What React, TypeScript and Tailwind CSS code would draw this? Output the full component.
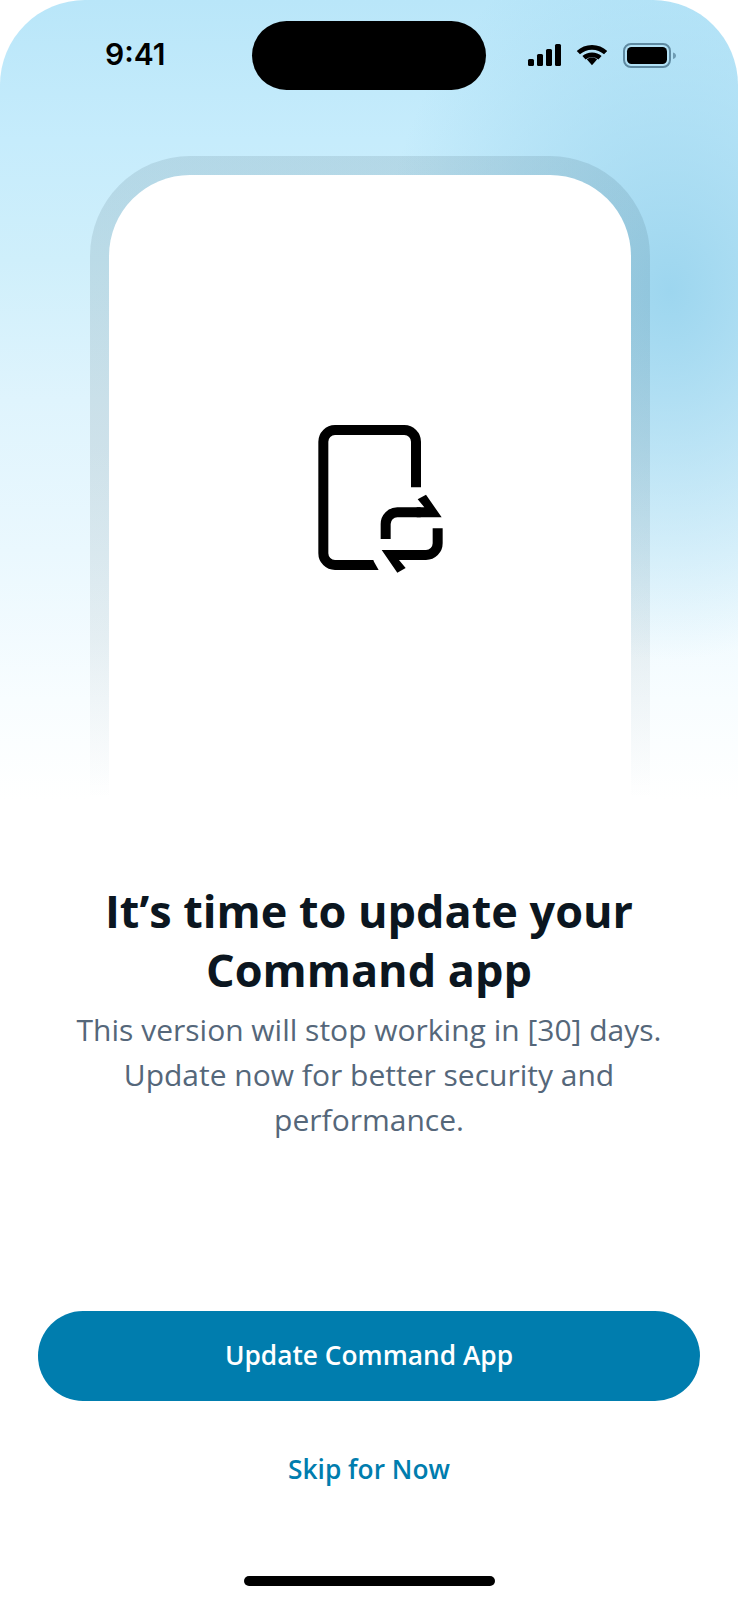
const openSans = "font-['Open_Sans',sans-serif]";

function StatusIcons() {
  return (
    <div className="flex items-start">
      {/* Signal */}
      <svg width="36" height="24" viewBox="0 0 36 24" className="ml-[41px] mt-[1px]" fill="#000">
        <rect x="1" y="15" width="6" height="7" rx="1.5" />
        <rect x="10" y="10" width="6" height="12" rx="1.5" />
        <rect x="19" y="5" width="6" height="17" rx="1.5" />
        <rect x="28" y="0" width="6" height="22" rx="1.5" />
      </svg>
      {/* Wifi */}
      <svg width="32" height="24" viewBox="0 0 34 24" className="ml-[13px]" fill="none" stroke="#000" strokeWidth="5">
        <path d="M2.500 9.500c8-7.600 21-7.600 29 0" />
        <path d="M8.500 15c4.600-4.200 12.400-4.200 17 0" />
        <path d="M11.500 16.500 17 23l5.500-6.500c-3-2.600-8-2.600-11 0z" fill="#000" stroke="none" />
      </svg>
      {/* Battery */}
      <svg width="54" height="26" viewBox="0 0 54 26" className="ml-[15px]" fill="none">
        <rect x="1" y="1" width="46" height="23" rx="7" stroke="#5f8aa1" strokeWidth="2" />
        <rect x="4" y="4" width="40" height="17" rx="4.500" fill="#000" />
        <path d="M50 9.500c2 .6 3 1.800 3 3.200s-1 2.600-3 3.200z" fill="#6f9cb3" />
      </svg>
    </div>
  );
}

function UpdateIcon() {
  return (
    <svg width="180" height="200" viewBox="0 0 540 600" fill="none">
      <path d="M378 262V125a35 35 0 0 0-35-35H135a35 35 0 0 0-35 35v335a35 35 0 0 0 35 35h115" stroke="#000" strokeWidth="30" />
      <path d="M245 480h4l17 30h-21z" fill="#000" />
      <g>
        <path d="M287 417v-45a35 35 0 0 1 35-35h70" stroke="#000" strokeWidth="30" />
        <path d="M408 284l47 68h-75v-30h23l-20-24z" fill="#000" />
      </g>
      <g transform="rotate(180 365 401)">
        <path d="M287 417v-45a35 35 0 0 1 35-35h70" stroke="#000" strokeWidth="30" />
        <path d="M408 284l47 68h-75v-30h23l-20-24z" fill="#000" />
      </g>
    </svg>
  );
}

export default function App() {
  return (
    <div className="bg-white">
      <div className={`${openSans} h-[1600px] w-[738px] overflow-hidden rounded-t-[85px] bg-[radial-gradient(ellipse_290px_370px_at_670px_290px,#9dd6ef_0%,#9dd6ef00_100%),linear-gradient(to_bottom,#b9e6f9_0px,#c6ecfc_140px,#cfeffb_260px,#dff4fd_400px,#eaf8fe_550px,#f8fdff_700px,#ffffff_800px)]`}>
        {/* Status bar */}
        <div className="flex h-[156px] items-start">
          <div className="ml-[105px] mt-[36px] w-[60px] font-['Inter',sans-serif] text-[30px] font-semibold leading-[36px] text-black">
            9:41
          </div>
          <div className="ml-[87px] mt-[21px] h-[69px] w-[234px] rounded-full bg-black" />
          <div className="mt-[43px]">
            <StatusIcons />
          </div>
        </div>

        {/* Device frame */}
        <div className="ml-[90px] mr-[88px] h-[644px] rounded-t-[100px] bg-[linear-gradient(to_bottom,#1432401c_0%,#1432401a_45%,#14324010_75%,#14324000_100%)] px-[19px] pt-[19px]">
          <div className="flex h-full justify-center rounded-t-[81px] bg-white pt-[225px]">
            <div className="ml-[20px] h-[200px]">
              <UpdateIcon />
            </div>
          </div>
        </div>

        {/* Copy */}
        <div className="mt-[81px] px-[38px] text-center">
          <h1 className="mx-auto text-[45px] font-bold leading-[59px] text-[#0b1620]">
            It’s time to update your
            <br />
            Command app
          </h1>
          <p className="mx-auto mt-[8px] w-[620px] text-[30px] leading-[45px] text-[#55677a]">
            This version will stop working in [30] days. Update now for better security and performance.
          </p>
        </div>

        {/* Actions */}
        <div className="mt-[169px] px-[38px]">
          <button className="flex h-[90px] w-full items-center justify-center rounded-full bg-[#007dae] text-[26.3px] font-semibold text-white">
            Update Command App
          </button>
          <button className="mt-[50px] block w-full text-center text-[26.3px] font-semibold leading-[36px] text-[#007dae]">
            Skip for Now
          </button>
        </div>

        {/* Home indicator */}
        <div className="mx-auto mt-[89px] h-[10px] w-[251px] rounded-full bg-black" />
      </div>
    </div>
  );
}
